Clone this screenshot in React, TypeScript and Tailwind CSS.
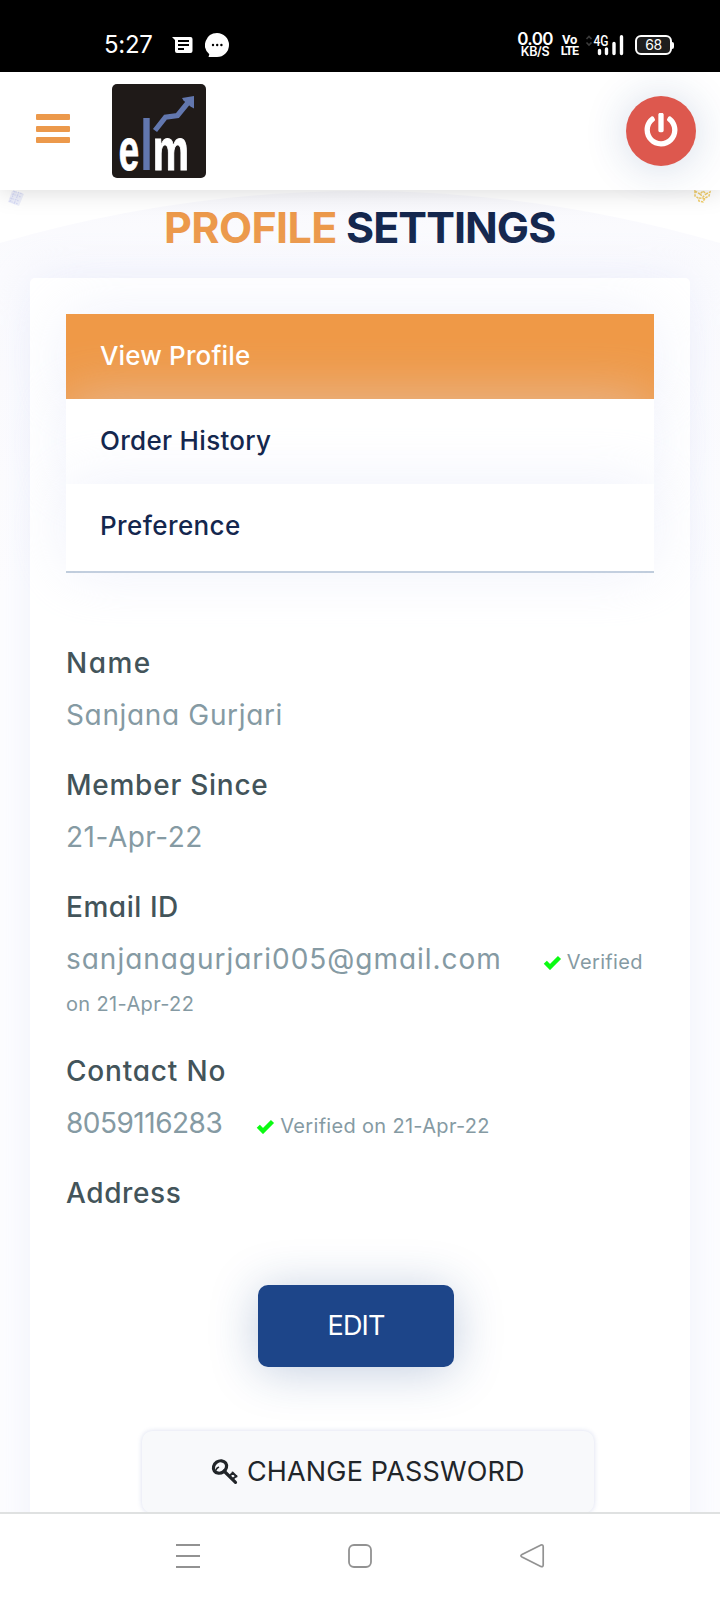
import type { ReactNode } from "react";
import { FaPowerOff } from "react-icons/fa";

function StatusBar() {
  return (
    <div className="flex h-[72px] shrink-0 items-start bg-black pl-[104px] text-white">
      <span className="mt-[30px] w-[66px] text-2xl leading-[30px] tracking-[-0.3px]">5:27</span>
      <svg className="mt-[35px] ml-[2px]" width="22" height="20" viewBox="0 0 22 20">
        <path d="M0 2h18.500a2 2 0 0 1 2 2v12a2 2 0 0 1-2 2H5a2 2 0 0 1-2-2V5z" fill="#fff" />
        <path d="M6 6h11M6 10h11M6 14h6" stroke="#000" strokeWidth="2" />
      </svg>
      <svg className="mt-[33px] ml-[11px]" width="24" height="24" viewBox="0 0 24 24">
        <path d="M12 0a12 12 0 1 1 0 24H3.500l.8-2.800A12 12 0 0 1 12 0z" fill="#fff" />
        <circle cx="8" cy="12" r="1.200" />
        <circle cx="12.200" cy="12" r="1.200" />
        <circle cx="16.400" cy="12" r="1.200" />
      </svg>
      <div className="mt-[31px] ml-[288px] flex w-[36px] flex-col items-center font-semibold">
        <span className="text-[17px] leading-[16px] tracking-[-0.6px]">0.00</span>
        <span className="text-[12.500px] leading-[10px] tracking-[-0.4px]">KB/S</span>
      </div>
      <div className="mt-[34px] ml-[8px] flex w-[17px] flex-col items-center font-['Roboto',sans-serif] font-bold">
        <span className="text-[13px] leading-[12px] tracking-[-0.3px]">Vo</span>
        <span className="text-[12.500px] leading-[10px] tracking-[-0.9px]">LTE</span>
      </div>
      <svg className="mt-[33px] ml-[7px]" width="40" height="24" viewBox="0 0 40 24">
        <path d="M1.500 6l2.500-2.500L6.500 6M1.500 9.500L4 12l2.500-2.500" fill="none" stroke="#3c3c3c" strokeWidth="1.600" />
        <text x="8.500" y="13" fill="#fff" fontFamily="Roboto, sans-serif" fontSize="14" fontWeight="500" textLength="15" lengthAdjust="spacingAndGlyphs">4G</text>
        <path d="M14.500 17.500v3M21.500 16v4.500M29 10.500v10M36.500 3.800v16.700" stroke="#fff" strokeWidth="3.400" strokeLinecap="round" />
      </svg>
      <div className="mt-[35px] ml-[10px] flex items-center">
        <span className="flex h-[20px] w-[37px] items-center justify-center rounded-[6px] border-2 border-white bg-[#1e1e1e] text-sm leading-none tracking-[-0.4px]">68</span>
        <span className="h-[7px] w-[2px] rounded-r bg-white" />
      </div>
    </div>
  );
}

function Logo() {
  return (
    <svg width="94" height="94" viewBox="0 0 94 94" overflow="visible">
      <rect width="94" height="94" rx="5" fill="#1f1a18" />
      <rect x="31.300" y="34" width="6.400" height="52" fill="#6277ae" />
      <path d="M43 46.500L53.500 33.200L65.500 31.500L76.500 18" fill="none" stroke="#6277ae" strokeWidth="5.200" />
      <path d="M70 14L82 12L82 24.500L78.500 22.500L71.500 16.500Z" fill="#6277ae" />
      <g fill="#fff" stroke="#fff" strokeWidth="1" fontFamily="Liberation Sans, sans-serif" fontWeight="700" fontSize="60">
        <text transform="translate(6.800 86) scale(0.610 1)">e</text>
        <text transform="translate(40.700 86) scale(0.680 1)">m</text>
      </g>
    </svg>
  );
}

function Header() {
  return (
    <header className="relative z-10 flex h-[118px] shrink-0 items-center justify-between bg-white pr-6 pl-9 shadow-[0_0_24px_rgba(0,0,0,0.17)]">
      <div className="flex items-center">
        <div className="flex w-[34px] flex-col gap-[5.500px] pb-[5px]">
          <span className="h-[6px] rounded-[1px] bg-[#ec994b]" />
          <span className="h-[6px] rounded-[1px] bg-[#ec994b]" />
          <span className="h-[6px] rounded-[1px] bg-[#ec994b]" />
        </div>
        <div className="ml-[42px]">
          <Logo />
        </div>
      </div>
      <button className="flex size-[70px] items-center justify-center rounded-full bg-[#dd584e] pb-[3px] text-white shadow-[0_2px_44px_rgba(29,69,137,0.2)]">
        <FaPowerOff size={34} />
      </button>
    </header>
  );
}

function Backdrop() {
  return (
    <svg className="absolute inset-0" width="720" height="1322" viewBox="0 0 720 1322">
      <defs>
        <linearGradient id="fade" gradientUnits="userSpaceOnUse" x1="0" y1="0" x2="0" y2="400">
          <stop offset="0" stopColor="#f9f9fd" />
          <stop offset="0.200" stopColor="#fbfbfe" />
          <stop offset="1" stopColor="#fefeff" />
        </linearGradient>
      </defs>
      <path d="M0 53Q180 1 360 1T720 53V1322H0z" fill="url(#fade)" />
      <path d="M12 1l12 3-5 12-11-4z" fill="#eef0fb" />
      <path d="M13 1l10 3M12 4l9 3M10 8l9 3M9 11l9 3M15 1l-5 11M19 2l-5 12" fill="none" stroke="#d6daf6" strokeWidth="1.200" strokeDasharray="1.500 1" />
      <path d="M695 1l5 3 3-3 3 3 4-2-1 4-4 2-2 4-4-1-1-3-3-2zM700 4l3 3 3-3M699 8l7 1" fill="none" stroke="#f2cf6c" strokeWidth="1.500" strokeDasharray="2.500 1" />
    </svg>
  );
}

function MenuItem({ children, className }: { children: ReactNode; className: string }) {
  return (
    <li className={`flex items-center pl-[34px] text-[26px] font-medium shadow-[0_0_60px_rgba(222,226,246,0.49)] ${className}`}>
      {children}
    </li>
  );
}

function Field({ label, labelClass, children }: { label: string; labelClass: string; children?: ReactNode }) {
  return (
    <div>
      <dt className={`mb-[10px] h-[42px] text-[28px] leading-[42px] font-medium text-[#43545a] ${labelClass}`}>{label}</dt>
      {children && <dd className="mb-[28px] text-[28px] leading-[42px] text-[#859aa3]">{children}</dd>}
    </div>
  );
}

function Tick({ className }: { className: string }) {
  return (
    <svg className={`inline-block align-[-1px] ${className}`} width="19" height="15" viewBox="0 0 19 15">
      <path d="M2.300 7.300L7 12L16.500 2.500" fill="none" stroke="#0bfb12" strokeWidth="4.400" />
    </svg>
  );
}

function KeyIcon() {
  return (
    <svg width="28" height="28" viewBox="0 0 28 28" fill="none" stroke="#212529" strokeLinecap="round">
      <ellipse cx="9" cy="9" rx="6.900" ry="5.900" transform="rotate(-35 9 9)" strokeWidth="3.200" />
      <path d="M5 12q.5-2 2.500-2.800" strokeWidth="1.500" />
      <path d="M13 13L24.500 24.300" strokeWidth="3.200" />
      <path d="M18.800 17.800L21.500 15M22.300 20.500L25.500 18M21.500 14.500l4 4" strokeWidth="2" />
    </svg>
  );
}

function NavBar() {
  return (
    <nav className="relative flex h-[88px] shrink-0 items-start border-t-2 border-[#dfe1e1] bg-white">
      <svg className="mt-[29px] ml-[175px]" width="26" height="26" viewBox="0 0 26 26">
        <path d="M1 2h24M1 13h24M1 24h24" stroke="#929292" strokeWidth="1.900" />
      </svg>
      <svg className="mt-[29px] ml-[146px]" width="26" height="26" viewBox="0 0 26 26">
        <rect x="2" y="2" width="22" height="22" rx="5" fill="none" stroke="#929292" strokeWidth="1.800" />
      </svg>
      <svg className="mt-[29px] ml-[146px]" width="26" height="26" viewBox="0 0 26 26">
        <path d="M22 2L3 11.500Q.800 12.800 3 14.100L21.800 23.500Q24.200 24.300 24.200 22V3.800Q24.200 1.300 22 2Z" fill="none" stroke="#929292" strokeWidth="1.700" />
      </svg>
    </nav>
  );
}

export default function App() {
  return (
    <div className="flex h-[1600px] w-[720px] flex-col overflow-hidden bg-white font-['Inter',sans-serif] [font-feature-settings:'cv11']">
      <StatusBar />
      <Header />
      <main className="relative h-[1322px] shrink-0 overflow-hidden">
        <Backdrop />
        <div className="relative px-[30px]">
          <h1 className="flex h-[88px] pt-[11px] pl-[134px] text-[43px] leading-[52px] font-bold">
            <span className="w-[182px] tracking-[-0.6px] text-[#ec994b]">PROFILE</span>
            <span className="tracking-[-0.950px] text-[#14274e]">SETTINGS</span>
          </h1>
          <section className="relative h-[1400px] rounded-[5px] bg-white p-9 shadow-[0_0_48px_rgba(222,226,246,0.49)]">
            <ul className="border-b-2 border-[#bccad9] text-[#14274e]">
              <MenuItem className="h-[85px] bg-[#ef9947] pb-[2px] tracking-[0.150px] text-white">View Profile</MenuItem>
              <MenuItem className="h-[85px] bg-white pb-[2px] tracking-[0.3px]">Order History</MenuItem>
              <MenuItem className="h-[87px] bg-white pb-[5px] tracking-[0.4px]">Preference</MenuItem>
            </ul>
            <dl className="mt-[69px]">
              <Field label="Name" labelClass="tracking-[1.500px]">
                <span className="tracking-[0.650px]">Sanjana Gurjari</span>
              </Field>
              <Field label="Member Since" labelClass="tracking-[0.750px]">
                <span className="tracking-[0.5px]">21-Apr-22</span>
              </Field>
              <Field label="Email ID" labelClass="tracking-[0.550px]">
                <span className="tracking-[0.970px]">sanjanagurjari005@gmail.com</span>
                <Tick className="mr-[5px] ml-[41px]" />
                <span className="text-xl leading-none tracking-[0.350px]">Verified on 21-Apr-22</span>
              </Field>
              <Field label="Contact No" labelClass="tracking-[0.8px]">
                <span className="tracking-[-0.5px]">8059116283</span>
                <Tick className="mr-[5px] ml-[34px]" />
                <span className="text-xl leading-none tracking-[0.320px]">Verified on 21-Apr-22</span>
              </Field>
              <Field label="Address" labelClass="tracking-[0.6px]" />
            </dl>
            <button className="mt-[71px] ml-[192px] block h-[82px] w-[196px] rounded-[10px] bg-[#1d4589] text-[27px] tracking-[-0.850px] text-white shadow-[0_4px_48px_rgba(29,69,137,0.27)]">
              EDIT
            </button>
            <button className="mt-[64px] ml-[76px] flex h-[82px] w-[452px] items-center rounded-[10px] bg-[#f8f9fb] pl-[69px] text-[27px] tracking-[0.150px] text-[#212529] shadow-[0_0_5px_rgba(60,80,170,0.2)]">
              <KeyIcon />
              <span className="ml-[8px]">CHANGE PASSWORD</span>
            </button>
          </section>
        </div>
      </main>
      <NavBar />
    </div>
  );
}
